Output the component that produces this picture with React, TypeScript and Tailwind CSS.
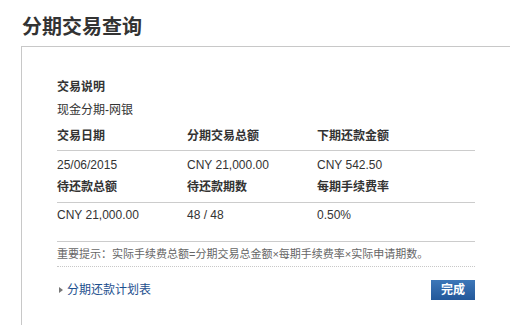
import React from "react";

const font = { fontFamily: '"Liberation Sans", Arial, "Noto Sans CJK SC", sans-serif' };

export default function App() {
  return (
    <div className="w-[510px] h-[325px] bg-white overflow-hidden text-[#333]" style={font}>
      <div className="pl-[22px] mt-[13px] mb-[5px] h-[28px] leading-[28px] text-[20px] font-bold text-[#333]">
        分期交易查询
      </div>
      <div className="ml-[21px] w-[520px] h-[300px] border-l border-t border-[#c8c8c8] pl-[35px] pt-[29px]">
        <div className="w-[418px] text-[12px]">
          <div className="h-[23px] leading-[23px] font-bold">交易说明</div>
          <div className="h-[23px] leading-[23px]">现金分期-网银</div>
          <div className="grid grid-cols-[130px_130px_1fr] h-[29px] items-center border-b border-[#cccccc] font-bold">
            <div>交易日期</div>
            <div>分期交易总额</div>
            <div>下期还款金额</div>
          </div>
          <div className="grid grid-cols-[130px_130px_1fr] h-[28px] items-center">
            <div>25/06/2015</div>
            <div>CNY 21,000.00</div>
            <div>CNY 542.50</div>
          </div>
          <div className="grid grid-cols-[130px_130px_1fr] h-[24px] leading-[16px] border-b border-[#cccccc] font-bold">
            <div>待还款总额</div>
            <div>待还款期数</div>
            <div>每期手续费率</div>
          </div>
          <div className="grid grid-cols-[130px_130px_1fr] h-[24px] leading-[24px] mb-[14px]">
            <div>CNY 21,000.00</div>
            <div>48 / 48</div>
            <div>0.50%</div>
          </div>
          <div className="border-t border-[#cccccc] h-[25px] leading-[24px] text-[11px] text-[#666]">
            重要提示：实际手续费总额=分期交易总金额×每期手续费率×实际申请期数。
          </div>
          <div className="border-t border-dotted border-[#c8c8c8]" />
          <div className="h-[45px] flex items-center justify-between">
            <div className="flex items-center">
              <span className="ml-[2px] w-0 h-0 border-y-[3px] border-y-transparent border-l-[4px] border-l-[#777]" />
              <span className="ml-[4px] text-[#1d4f8e] text-[12px]">分期还款计划表</span>
            </div>
            <button className="w-[44px] h-[20px] bg-gradient-to-b from-[#3d77b8] to-[#23589a] text-white font-bold text-[12px] leading-[20px]">
              完成
            </button>
          </div>
        </div>
      </div>
    </div>
  );
}
